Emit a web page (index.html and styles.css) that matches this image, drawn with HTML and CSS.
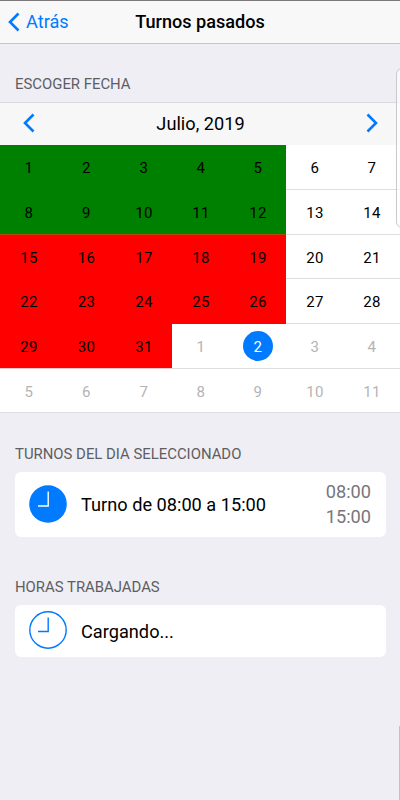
FILE: index.html
```html
<!DOCTYPE html>
<html lang="es">
<head>
<meta charset="utf-8">
<title>Turnos pasados</title>
<link rel="stylesheet" href="styles.css">
</head>
<body>
<header class="navbar">
  <a class="back"><svg class="chevron" width="12" height="20" viewBox="0 0 12 20"><path d="M10.500 1.500 2 10l8.500 8.500"/></svg><span>Atrás</span></a>
  <h1 class="title">Turnos pasados</h1>
</header>
<main>
  <h2 class="section-title date-title">ESCOGER FECHA</h2>
  <section class="calendar">
    <div class="month-bar">
      <svg class="chevron" width="12" height="20" viewBox="0 0 12 20"><path d="M10.500 1.500 2 10l8.500 8.500"/></svg>
      <span class="month">Julio, 2019</span>
      <svg class="chevron" width="12" height="20" viewBox="0 0 12 20"><path d="M1.500 1.500 10 10l-8.500 8.500"/></svg>
    </div>
    <div class="days">
      <span class="day green">1</span><span class="day green">2</span><span class="day green">3</span><span class="day green">4</span><span class="day green">5</span><span class="day">6</span><span class="day">7</span>
      <span class="day green last">8</span><span class="day green last">9</span><span class="day green last">10</span><span class="day green last">11</span><span class="day green last">12</span><span class="day">13</span><span class="day">14</span>
      <span class="day red">15</span><span class="day red">16</span><span class="day red">17</span><span class="day red">18</span><span class="day red">19</span><span class="day">20</span><span class="day">21</span>
      <span class="day red">22</span><span class="day red">23</span><span class="day red">24</span><span class="day red">25</span><span class="day red">26</span><span class="day">27</span><span class="day">28</span>
      <span class="day red last">29</span><span class="day red last">30</span><span class="day red last">31</span><span class="day other">1</span><span class="day other"><span class="selected">2</span></span><span class="day other">3</span><span class="day other">4</span>
      <span class="day other">5</span><span class="day other">6</span><span class="day other">7</span><span class="day other">8</span><span class="day other">9</span><span class="day other">10</span><span class="day other">11</span>
    </div>
  </section>
  <h2 class="section-title shifts-title">TURNOS DEL DIA SELECCIONADO</h2>
  <section class="card shift">
    <svg class="clock filled" width="38" height="38" viewBox="0 0 38 38"><circle cx="19" cy="19" r="18.800"/><path d="M19.200 6.500v14.500H9"/></svg>
    <span class="label">Turno de 08:00 a 15:00</span>
    <span class="times"><span>08:00</span><span>15:00</span></span>
  </section>
  <h2 class="section-title hours-title">HORAS TRABAJADAS</h2>
  <section class="card hours">
    <svg class="clock" width="38" height="38" viewBox="0 0 38 38"><circle cx="19" cy="19" r="18.200"/><path d="M19.200 6.500v14H9"/></svg>
    <span class="label">Cargando...</span>
  </section>
</main>
<div class="side-panel"></div>
<div class="scrollbar"></div>
</body>
</html>
```
FILE: styles.css
```css
* { box-sizing: border-box; }
body {
  margin: 0;
  height: 800px;
  position: relative;
  overflow: hidden;
  background: #efeef4;
  color: #000;
  font-family: Roboto, sans-serif;
  font-size: 18px;
}
h1, h2 { margin: 0; }
.navbar {
  height: 44px;
  display: grid;
  grid-template-columns: 1fr auto 1fr;
  align-items: center;
  padding: 0 8px 1px;
  background: #f8f8f8;
  border-top: 1px solid #7c7879;
  border-bottom: 1px solid #c5c5c9;
}
.back { display: flex; align-items: center; gap: 6px; color: #007aff; font-size: 18.2px; }
.title { font-size: 18.1px; font-weight: 500; line-height: 24px; }
.chevron { display: block; fill: none; stroke: #007aff; stroke-width: 2.6; }
.section-title {
  padding-left: 15px;
  color: #5d5d62;
  font-size: 14.9px;
  font-weight: 400;
  line-height: 20px;
}
.date-title { height: 58px; padding-top: 30px; }
.month-bar {
  height: 43px;
  display: flex;
  align-items: center;
  justify-content: space-between;
  padding: 0 22px 2px 23px;
  background: #f7f7f7;
  border-top: 1px solid #dbdbdf;
}
.month { font-size: 18.2px; }
.days {
  display: grid;
  grid-template-columns: 57px 58px 57px 57px 57px 57px 57px;
  grid-template-rows: 45px 45px 44px 45px 45px 44px;
}
.day {
  display: flex;
  align-items: center;
  justify-content: center;
  padding-top: 2px;
  padding-left: 1px;
  background: #fff;
  border-bottom: 1px solid #dedee0;
  font-size: 15px;
  letter-spacing: .4px;
}
.green { background: #008000; border-color: #008000; }
.green.last { border-color: #b34a00; }
.red { background: #f00; border-color: #f00; }
.red.last { border-color: #f3c8c9; }
.other { color: #b4b4b4; }
.selected {
  width: 30px;
  height: 30px;
  display: flex;
  align-items: center;
  justify-content: center;
  margin-top: -3px;
  padding-top: 2px;
  border-radius: 50%;
  background: #007aff;
  color: #fff;
}
.shifts-title { height: 59px; padding-top: 31px; }
.card {
  display: flex;
  align-items: center;
  gap: 14px;
  margin: 0 14px 0 15px;
  padding: 0 15px 0 14px;
  border-radius: 6px;
  background: #fff;
}
.shift { height: 65px; }
.hours { height: 52px; }
.hours-title { height: 68px; padding-top: 40px; }
.label { font-size: 18.2px; }
.clock { margin-bottom: 2px; fill: none; stroke: #007aff; stroke-width: 1.4; }
.filled circle { fill: #007aff; stroke: none; }
.filled path { stroke: #fff; }
.times {
  display: flex;
  flex-direction: column;
  margin-left: auto;
  padding-bottom: 1px;
  color: #77777a;
  font-size: 18.2px;
  line-height: 25px;
}
.side-panel {
  position: absolute;
  top: 68px;
  right: -8px;
  width: 12px;
  height: 160px;
  border: 1px solid #c9c9cc;
  border-radius: 6px;
  background: rgba(255, 255, 255, .6);
}
.scrollbar {
  position: absolute;
  top: 726px;
  right: 0;
  width: 1px;
  height: 74px;
  background: #c2c2c5;
}
```
